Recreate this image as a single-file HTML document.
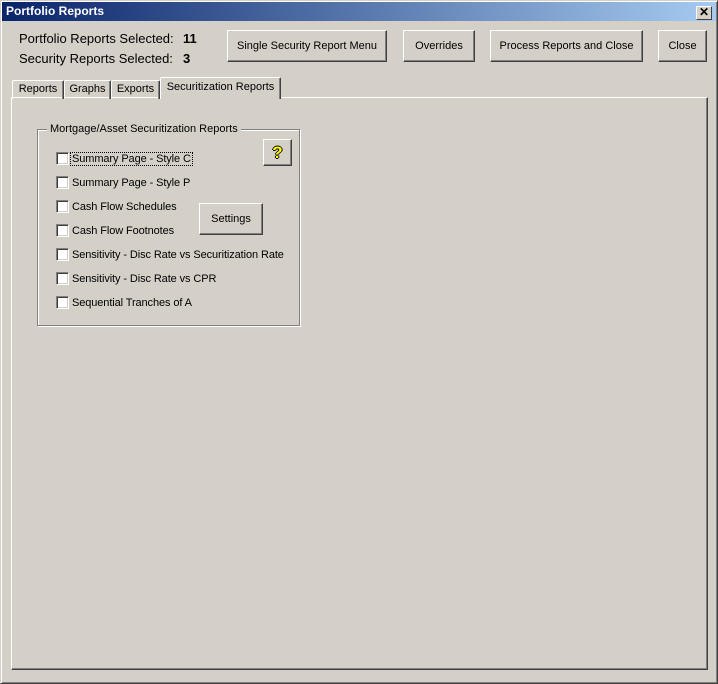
<!DOCTYPE html>
<html><head><style>
*{margin:0;padding:0;box-sizing:border-box}
body{width:718px;height:684px;background:#d4d0c8;font-family:"Liberation Sans",Tahoma,sans-serif;font-size:11px;color:#000;position:relative;overflow:hidden}
.win{position:absolute;left:0;top:0;width:718px;height:684px;border:1px solid;border-color:#d4d0c8 #404040 #404040 #d4d0c8;box-shadow:inset 1px 1px #fff,inset -1px -1px #808080}
.title{position:absolute;left:2px;top:2px;width:714px;height:19px;background:linear-gradient(to right,#0a246a,#a6caf0);color:#fff;font-weight:bold;font-size:12px;line-height:19px;padding-left:4px}
.x{position:absolute;right:4px;top:4px;width:16px;height:14px;background:#d4d0c8;border:1px solid;border-color:#fff #404040 #404040 #fff;color:#000;font-size:12px;line-height:11px;text-align:center;font-weight:bold}
.a{position:absolute}
.btn{position:absolute;background:#d4d0c8;border:1px solid;border-color:#fff #404040 #404040 #fff;box-shadow:inset -1px -1px #808080;text-align:center;font-size:11px}
.lbl{font-size:13px}
.tab{position:absolute;top:80px;height:19px;border:1px solid;border-color:#fff #404040 transparent #fff;border-bottom:none;box-shadow:inset -1px 0 #808080;font-size:11px;line-height:17px;text-align:center;border-radius:2px 2px 0 0}
.panel{position:absolute;left:11px;top:97px;width:697px;height:573px;border:1px solid;border-color:#fff #404040 #404040 #fff;box-shadow:inset -1px -1px #808080}
.grp{position:absolute;left:37px;top:129px;width:263px;height:197px;border:1px solid #808080;box-shadow:1px 1px #fff,inset 1px 1px #fff}
.cb{position:absolute;left:56px;width:13px;height:13px;background:#fff;border:1px solid;border-color:#808080 #fff #fff #808080;box-shadow:inset 1px 1px #404040,inset -1px -1px #d4d0c8}
.ct{position:absolute;left:72px;font-size:11px;letter-spacing:-0.1px}
</style></head><body>
<div class="win"></div>
<div class="title">Portfolio Reports<div class="x">✕</div></div>
<div class="a lbl" style="left:19px;top:31px">Portfolio Reports Selected:</div>
<div class="a lbl" style="left:183px;top:31px;font-weight:bold">11</div>
<div class="a lbl" style="left:19px;top:51px">Security Reports Selected:</div>
<div class="a lbl" style="left:183px;top:51px;font-weight:bold">3</div>
<div class="btn" style="left:227px;top:30px;width:160px;height:32px;line-height:30px">Single Security Report Menu</div>
<div class="btn" style="left:403px;top:30px;width:72px;height:32px;line-height:30px">Overrides</div>
<div class="btn" style="left:490px;top:30px;width:153px;height:32px;line-height:30px">Process Reports and Close</div>
<div class="btn" style="left:658px;top:30px;width:49px;height:32px;line-height:30px">Close</div>
<div class="panel"></div>
<div class="tab" style="left:12px;width:52px">Reports</div>
<div class="tab" style="left:64px;width:47px">Graphs</div>
<div class="tab" style="left:111px;width:49px">Exports</div>
<div class="tab" style="left:160px;top:77px;height:22px;width:121px;background:#d4d0c8;line-height:18px">Securitization Reports</div>
<div class="grp"></div>
<div class="a" style="left:47px;top:123px;background:#d4d0c8;padding:0 3px;font-size:11px">Mortgage/Asset Securitization Reports</div>
<div class="btn" style="left:263px;top:139px;width:29px;height:27px;line-height:25px;color:#ff0;font-weight:bold;font-size:17px;text-shadow:1px 0 #000,-1px 0 #000,0 1px #000,0 -1px #000">?</div>
<div class="btn" style="left:199px;top:203px;width:64px;height:32px;line-height:30px;font-size:11px">Settings</div>
<div class="cb" style="top:152px"></div><div class="ct" style="top:153px;outline:1px dotted #000;padding:0 1px;left:71px">Summary Page - Style C</div>
<div class="cb" style="top:176px"></div><div class="ct" style="top:177px">Summary Page - Style P</div>
<div class="cb" style="top:200px"></div><div class="ct" style="top:201px">Cash Flow Schedules</div>
<div class="cb" style="top:224px"></div><div class="ct" style="top:225px">Cash Flow Footnotes</div>
<div class="cb" style="top:248px"></div><div class="ct" style="top:249px">Sensitivity - Disc Rate vs Securitization Rate</div>
<div class="cb" style="top:272px"></div><div class="ct" style="top:273px">Sensitivity - Disc Rate vs CPR</div>
<div class="cb" style="top:296px"></div><div class="ct" style="top:297px">Sequential Tranches of A</div>
</body></html>
